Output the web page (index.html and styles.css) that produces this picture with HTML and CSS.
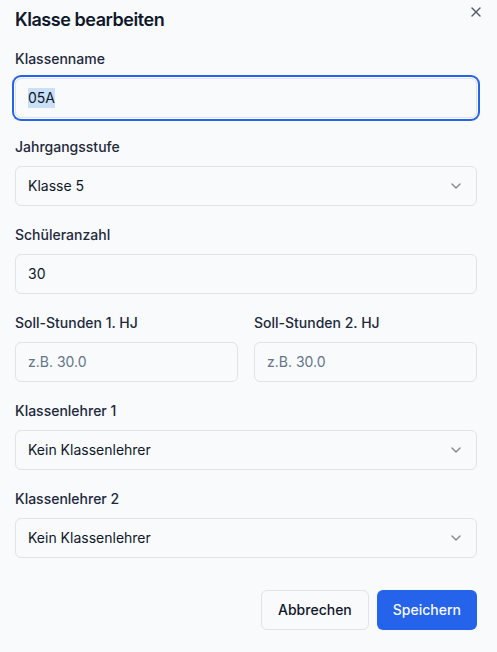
FILE: index.html
```html
<!DOCTYPE html>
<html lang="de">
<head>
<meta charset="utf-8">
<title>Klasse bearbeiten</title>
<link rel="stylesheet" href="styles.css">
</head>
<body>
<div class="dialog">
  <button class="close" aria-label="Schließen">
    <svg width="16" height="16" viewBox="0 0 24 24" fill="none" stroke="currentColor" stroke-width="2" stroke-linecap="round" stroke-linejoin="round"><path d="M18 6 6 18"/><path d="m6 6 12 12"/></svg>
  </button>
  <h2 class="title">Klasse bearbeiten</h2>
  <form class="form">
    <div class="field">
      <label class="label">Klassenname</label>
      <div class="input focused"><span class="sel">05A</span></div>
    </div>
    <div class="field">
      <label class="label">Jahrgangsstufe</label>
      <div class="input select"><span>Klasse 5</span>
        <svg class="chev" width="16" height="16" viewBox="0 0 24 24" fill="none" stroke="currentColor" stroke-width="2" stroke-linecap="round" stroke-linejoin="round"><path d="m6 9 6 6 6-6"/></svg>
      </div>
    </div>
    <div class="field">
      <label class="label">Schüleranzahl</label>
      <div class="input"><span>30</span></div>
    </div>
    <div class="row">
      <div class="field">
        <label class="label">Soll-Stunden 1. HJ</label>
        <div class="input"><span class="ph">z.B. 30.0</span></div>
      </div>
      <div class="field">
        <label class="label">Soll-Stunden 2. HJ</label>
        <div class="input"><span class="ph">z.B. 30.0</span></div>
      </div>
    </div>
    <div class="field">
      <label class="label">Klassenlehrer 1</label>
      <div class="input select"><span>Kein Klassenlehrer</span>
        <svg class="chev" width="16" height="16" viewBox="0 0 24 24" fill="none" stroke="currentColor" stroke-width="2" stroke-linecap="round" stroke-linejoin="round"><path d="m6 9 6 6 6-6"/></svg>
      </div>
    </div>
    <div class="field">
      <label class="label">Klassenlehrer 2</label>
      <div class="input select"><span>Kein Klassenlehrer</span>
        <svg class="chev" width="16" height="16" viewBox="0 0 24 24" fill="none" stroke="currentColor" stroke-width="2" stroke-linecap="round" stroke-linejoin="round"><path d="m6 9 6 6 6-6"/></svg>
      </div>
    </div>
  </form>
  <div class="footer">
    <button class="btn btn-outline">Abbrechen</button>
    <button class="btn btn-primary">Speichern</button>
  </div>
</div>
</body>
</html>
```

FILE: styles.css
```css
* { box-sizing: border-box; }
html, body {
  margin: 0;
  background: #f8fafc;
  font-family: Inter, "Noto Sans", sans-serif;
  color: #0f172a;
}
.dialog {
  position: relative;
  padding: 6px 20px 0 15px;
  width: 497px;
  height: 652px;
}
.close {
  position: absolute;
  top: 4px;
  right: 13px;
  width: 16px;
  height: 16px;
  padding: 0;
  border: 0;
  background: none;
  color: #0f172a;
  opacity: 0.7;
  display: flex;
}
.title {
  margin: 0;
  font-size: 18px;
  line-height: 28px;
  font-weight: 600;
  letter-spacing: -0.45px;
}
.form {
  margin-top: 15px;
  display: flex;
  flex-direction: column;
  gap: 19px;
}
.field {
  display: flex;
  flex-direction: column;
  gap: 9px;
  min-width: 0;
}
.label {
  font-size: 14px;
  line-height: 20px;
  font-weight: 500;
  color: #1e293b;
}
.input {
  height: 40px;
  border: 1px solid #dfe3ea;
  border-radius: 6px;
  padding: 0 12px;
  display: flex;
  align-items: center;
  font-size: 14px;
  line-height: 20px;
  color: #0f172a;
  background: #f8fafc;
}
.input.focused {
  box-shadow: 0 0 0 1px #f8fafc, 0 0 0 3px #2563eb;
}
.sel {
  background: #c9e0f7;
}
.ph { color: #64748b; }
.select { justify-content: space-between; }
.chev {
  color: #0f172a;
  opacity: 0.5;
}
.row {
  display: grid;
  grid-template-columns: 1fr 1fr;
  gap: 16px;
}
.footer {
  margin-top: 32px;
  display: flex;
  justify-content: flex-end;
  gap: 8px;
}
.btn {
  height: 40px;
  padding: 0 16px;
  border-radius: 6px;
  font-family: Inter, "Noto Sans", sans-serif;
  font-size: 14px;
  font-weight: 500;
  line-height: 20px;
}
.btn-outline {
  border: 1px solid #dfe3ea;
  background: #f8fafc;
  color: #0f172a;
}
.btn-primary {
  border: 0;
  background: #2563eb;
  color: #f8fafc;
}
```
